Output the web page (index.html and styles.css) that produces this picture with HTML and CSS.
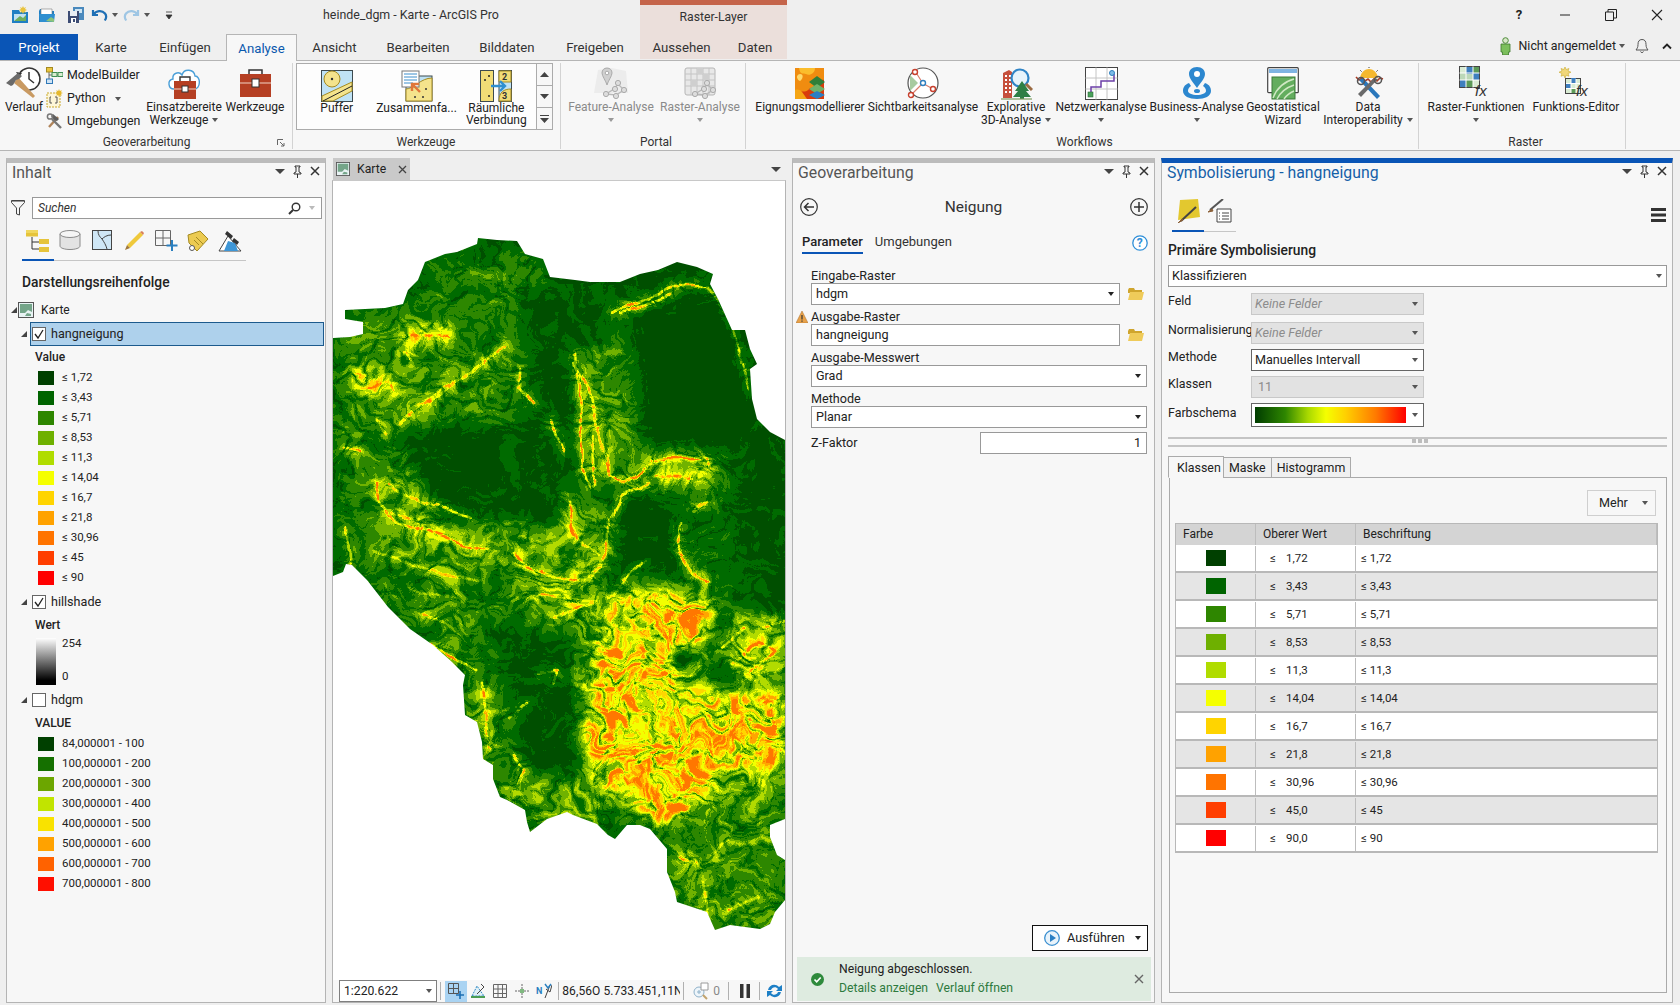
FILE: index.html
```html
<!DOCTYPE html>
<html lang="de">
<head>
<meta charset="utf-8">
<title>heinde_dgm - Karte - ArcGIS Pro</title>
<link rel="stylesheet" href="styles.css">
</head>
<body>
<div class="app">
  <div class="ctx"><span>Raster-Layer</span></div>

  <header class="titlebar">
    <div class="qat">
      <svg class="q1" width="18" height="18" viewBox="0 0 18 18"><path d="M1 4h7l1 2h8v11H1z" fill="#1f7fc4"/><path d="M3 8h12v7H3z" fill="#bfe0f2"/><path d="M3 15l6-5 3 2 3-3v6z" fill="#6fae5c"/><path d="M12 0l1 2 2-1-1 2 2 1-2 1 1 2-2-1-1 2-1-2-2 1 1-2-2-1 2-1-1-2 2 1z" fill="#e9c33c"/></svg>
      <svg class="q2" width="18" height="18" viewBox="0 0 18 18"><path d="M1 5l1-2h5l1 2h8v11H1z" fill="#1f7fc4"/><path d="M3 3h11v7H3z" fill="#fff" stroke="#7a7a7a" stroke-width=".6"/><path d="M1 8h16l-1 8H2z" fill="#2f8fd0"/><path d="M8 15l5-4 3 2v3z" fill="#8cc47a"/></svg>
      <svg class="q3" width="18" height="18" viewBox="0 0 18 18"><path d="M6 1h11v13H6z" fill="#4a89bd"/><path d="M8 3h7v4H8z" fill="#cfe5f3"/><path d="M1 5h11v12H1z" fill="#3d4c74"/><path d="M3 5h7v5H3z" fill="#e9eef4"/><path d="M4 12h5v5H4z" fill="#fff"/><path d="M6 13h2v3H6z" fill="#3d4c74"/></svg>
      <svg class="q4" width="17" height="14" viewBox="0 0 17 14"><path d="M2 2v5h5M2.600 6.600C5 2.500 11 2 14 5.500c1.600 2 1.400 4.600-.2 7" fill="none" stroke="#1e6fb5" stroke-width="2.200"/></svg>
      <i class="caret q5"></i>
      <svg class="q6" width="17" height="14" viewBox="0 0 17 14"><path d="M15 2v5h-5M14.400 6.600C12 2.500 6 2 3 5.500c-1.600 2-1.400 4.600.2 7" fill="none" stroke="#9fc6e4" stroke-width="2.200"/></svg>
      <i class="caret q7"></i>
      <svg class="q8" width="8" height="9" viewBox="0 0 8 9"><path d="M1 1h6M1 4h6l-3 4z" fill="#333" stroke="#333" stroke-width=".8"/></svg>
    </div>
    <div class="doc-title">heinde_dgm - Karte - ArcGIS Pro</div>
    <div class="winctl">
      <span class="wbtn help">?</span>
      <span class="wbtn"><svg width="12" height="12" viewBox="0 0 12 12"><path d="M1 6h10" stroke="#222" stroke-width="1"/></svg></span>
      <span class="wbtn"><svg width="12" height="12" viewBox="0 0 12 12"><path d="M.5 3h8v8.500h-8zM3 3V.5h8.500V9H9" fill="none" stroke="#222"/></svg></span>
      <span class="wbtn"><svg width="12" height="12" viewBox="0 0 12 12"><path d="M1 1l10 10M11 1L1 11" stroke="#222" stroke-width="1.100"/></svg></span>
    </div>
  </header>

  <nav class="tabrow">
    <a class="tab project">Projekt</a>
    <a class="tab">Karte</a>
    <a class="tab">Einfügen</a>
    <a class="tab active">Analyse</a>
    <a class="tab">Ansicht</a>
    <a class="tab">Bearbeiten</a>
    <a class="tab">Bilddaten</a>
    <a class="tab">Freigeben</a>
    <a class="tab">Aussehen</a>
    <a class="tab">Daten</a>
    <div class="account">
      <svg width="11" height="18" viewBox="0 0 11 18"><circle cx="5.500" cy="3.500" r="2.800" fill="#d8e8c8" stroke="#4d8a3a"/><path d="M1 7h9v8H8.500v3h-6v-3H1z" fill="#7cbf5c" stroke="#3f7a2e" stroke-width=".8"/></svg>
      <span class="acct-name">Nicht angemeldet</span><i class="caret"></i>
      <svg class="bell" width="14" height="16" viewBox="0 0 14 16"><path d="M7 1.500c-3 0-4 2-4 5 0 3-1 4-2 5.500h12c-1-1.500-2-2.500-2-5.500 0-3-1-5-4-5zM5.500 13.500a1.600 1.600 0 0 0 3 0" fill="none" stroke="#555" stroke-width="1"/></svg>
      <svg class="chev" width="10" height="7" viewBox="0 0 10 7"><path d="M1 5.500l4-4 4 4" fill="none" stroke="#222" stroke-width="1.800"/></svg>
    </div>
  </nav>

  <section class="ribbon">
    <div class="group g-geo">
      <div class="tools">
        <div class="tool t-verlauf">
          <span class="ticon"><svg width="38" height="34" viewBox="0 0 38 34"><circle cx="24" cy="13" r="11" fill="#fff" stroke="#333" stroke-width="1.500" stroke-dasharray="52 8" transform="rotate(-100 24 13)"/><path d="M24 6v7l5 4" fill="none" stroke="#333" stroke-width="1.500"/><path d="M11 6l3 5 3-4z" fill="#333"/><path d="M9 17l19 15 2-2-17-19z" fill="#c99a62"/><path d="M1 17l12-10 4 3-3 3-3 1-3 5-2 1z" fill="#6a6a6a"/></svg></span>
          <span class="lbl">Verlauf</span>
        </div>
        <div class="smalls">
          <div class="small"><svg width="17" height="17" viewBox="0 0 17 17"><path d="M3 3v11h3M6 8H3M8 8h5" fill="none" stroke="#666"/><rect x=".5" y=".5" width="6" height="4.500" fill="#eac53f" stroke="#a48a22"/><rect x="6" y="5.500" width="5" height="4" fill="#d8ecd0" stroke="#3f8f55"/><rect x="12" y="5.500" width="5" height="4" fill="#d8ecd0" stroke="#3f8f55"/><rect x=".5" y="12" width="6" height="4.500" fill="#cfe3f4" stroke="#2f78b7"/></svg><span>ModelBuilder</span></div>
          <div class="small py"><svg width="17" height="19" viewBox="0 0 17 19"><path d="M1 4h13v14H1z" fill="#fdf6d8" stroke="#c9a92c" stroke-dasharray="2 1"/><path d="M5 8H4v6h2M9 8h2v6H9" fill="none" stroke="#555"/><path d="M13 0l.8 2 2-.8-.8 2 2 .8-2 .8.800 2-2-.8-.8 2-.8-2-2 .8.800-2-2-.8 2-.8-.8-2 2 .8z" fill="#e6b92c"/></svg><span>Python</span><i class="caret"></i></div>
          <div class="small"><svg width="17" height="17" viewBox="0 0 17 17"><path d="M3 14L12 4" stroke="#b0845a" stroke-width="2.400"/><path d="M7 1l6 5-2 2-3-1-3-4z" fill="#5e5e5e"/><path d="M15 15L6 6" stroke="#777" stroke-width="2.400"/><circle cx="4" cy="3.500" r="2.600" fill="none" stroke="#777" stroke-width="1.500"/></svg><span>Umgebungen</span></div>
        </div>
        <div class="tool t-einsatz">
          <span class="ticon"><svg width="34" height="33" viewBox="0 0 34 33"><path d="M7 22C1 22 0 13 6 12 5 6 12 4 15 8c2-7 12-6 13 1 6 0 6 13-1 13" fill="#fff" stroke="#4a9fd8" stroke-width="1.400"/><path d="M7 14h22v18H7z" fill="#b53f23"/><path d="M13 14v-4h10v4" fill="none" stroke="#333" stroke-width="1.400"/><path d="M7 22h22" stroke="#f3d4c6"/><rect x="15" y="19" width="6" height="6" fill="#fff" stroke="#333"/></svg></span>
          <span class="lbl">Einsatzbereite<br>Werkzeuge<i class="caret in"></i></span>
        </div>
        <div class="tool t-werk">
          <span class="ticon"><svg width="33" height="28" viewBox="0 0 33 28"><path d="M1 5h31v23H1z" fill="#b53f23"/><path d="M10 5V1h13v4" fill="none" stroke="#333" stroke-width="1.500"/><path d="M1 14h31" stroke="#f3d4c6"/><rect x="13" y="10" width="7" height="8" fill="#fff" stroke="#333"/></svg></span>
          <span class="lbl">Werkzeuge</span>
        </div>
      </div>
      <div class="grp-label">Geoverarbeitung<svg class="launch" width="8" height="8" viewBox="0 0 8 8"><path d="M.5 6V.5H6M3 3l4 4M7 4v3H4" fill="none" stroke="#666"/></svg></div>
    </div>

    <div class="group g-werk">
      <div class="gallery">
        <div class="gal-item">
          <span class="ticon"><svg width="32" height="32" viewBox="0 0 32 32"><rect x=".5" y=".5" width="31" height="31" fill="#bfe2f5" stroke="#3d4a4f"/><circle cx="11" cy="9" r="8" fill="#f4e38c" stroke="#a48a22"/><circle cx="11" cy="9" r="1.200" fill="#333"/><path d="M1 31v-5L31 12v9L12 31z" fill="#f4e38c" stroke="#a48a22"/><path d="M2 31L31 16" stroke="#222"/></svg></span>
          <span class="lbl">Puffer</span>
        </div>
        <div class="gal-item">
          <span class="ticon"><svg width="32" height="32" viewBox="0 0 32 32"><rect x="5" y="6" width="26" height="25" fill="#bfe2f5" stroke="#3d4a4f"/><path d="M5 31V19C12 19 20 8 31 8v23z" fill="#f4e38c" stroke="#a48a22"/><circle cx="14" cy="27" r="1" fill="#333"/><circle cx="22" cy="27" r="1" fill="#333"/><circle cx="25" cy="19" r="1" fill="#333"/><rect x="1" y="1" width="17" height="16" fill="#fff" stroke="#777"/><path d="M3 4h13M3 7h13M3 10h13M3 13h9" stroke="#3d8ecb"/><path d="M19 22l-7-7M11 21v-7h7" fill="none" stroke="#e0763a" stroke-width="2.400"/></svg></span>
          <span class="lbl">Zusammenfa...</span>
        </div>
        <div class="gal-item">
          <span class="ticon"><svg width="32" height="32" viewBox="0 0 32 32"><rect x=".5" y=".5" width="13" height="31" fill="#f1dc76" stroke="#3d4a4f"/><rect x="19" y=".5" width="12.500" height="31" fill="#bfe2f5" stroke="#3d4a4f"/><path d="M19 1h12v11H19zM19 31c0-9 5-12 12-12v12z" fill="#f1dc76" stroke="#a48a22"/><text x="22" y="10" class="gnum">2</text><text x="22" y="29" class="gnum">3</text><circle cx="9" cy="6" r="1" fill="#222"/><circle cx="5" cy="10" r="1" fill="#222"/><circle cx="9" cy="26" r="1" fill="#222"/><path d="M11 16h13M20 11l5 5-5 5" fill="none" stroke="#2f8fd0" stroke-width="2.400"/></svg></span>
          <span class="lbl">Räumliche<br>Verbindung</span>
        </div>
        <div class="gal-scroll">
          <span><svg width="9" height="5" viewBox="0 0 9 5"><path d="M4.500 0L9 5H0z" fill="#444"/></svg></span>
          <span><svg width="9" height="5" viewBox="0 0 9 5"><path d="M4.500 5L9 0H0z" fill="#444"/></svg></span>
          <span><svg width="9" height="8" viewBox="0 0 9 8"><path d="M0 0h9v1H0zM0 3h9L4.500 8z" fill="#444"/></svg></span>
        </div>
      </div>
      <div class="grp-label">Werkzeuge</div>
    </div>

    <div class="group g-portal">
      <div class="tools">
        <div class="tool t-feat off">
          <span class="ticon"><svg width="34" height="34" viewBox="0 0 34 34"><path d="M4 4l14-2 14 3 2 22H0z" fill="#ececec"/><path d="M13 2c-3 0-5 2-5 5 0 3 4 8 5 12 1-4 5-9 5-12 0-3-2-5-5-5z" fill="#d0d0d0" stroke="#aaa"/><circle cx="13" cy="7" r="1.800" fill="#fff" stroke="#aaa"/><path d="M12 28l8-5 4-5 6 6-8 5z" fill="none" stroke="#b8b8b8" stroke-width="1.400"/><circle cx="12" cy="28" r="2.600" fill="#ddd" stroke="#aaa"/><circle cx="21" cy="23" r="2.600" fill="#ddd" stroke="#aaa"/><circle cx="24" cy="17" r="2.600" fill="#ddd" stroke="#aaa"/><circle cx="30" cy="24" r="2.600" fill="#ddd" stroke="#aaa"/><circle cx="22" cy="30" r="2.600" fill="#ddd" stroke="#aaa"/></svg></span>
          <span class="lbl dim">Feature-Analyse</span><i class="caret mid dimc"></i>
        </div>
        <div class="tool t-rast off">
          <span class="ticon"><svg width="34" height="34" viewBox="0 0 34 34"><rect x="2" y="2" width="30" height="27" rx="2" fill="#e8e8e8" stroke="#b5b5b5"/><path d="M2 8h30M2 14h30M2 20h30M8 2v27M14 2v27M20 2v27M26 2v27" stroke="#c4c4c4"/><path d="M14 2h6v6h-6zM20 8h6v6h-6zM8 14h6v6H8z" fill="#cfcfcf"/><path d="M12 28l8-5 4-5 6 6-8 5z" fill="none" stroke="#b8b8b8" stroke-width="1.400"/><circle cx="12" cy="28" r="2.600" fill="#ddd" stroke="#aaa"/><circle cx="21" cy="23" r="2.600" fill="#ddd" stroke="#aaa"/><circle cx="24" cy="17" r="2.600" fill="#ddd" stroke="#aaa"/><circle cx="30" cy="24" r="2.600" fill="#ddd" stroke="#aaa"/><circle cx="22" cy="30" r="2.600" fill="#ddd" stroke="#aaa"/></svg></span>
          <span class="lbl dim">Raster-Analyse</span><i class="caret mid dimc"></i>
        </div>
      </div>
      <div class="grp-label">Portal</div>
    </div>

    <div class="group g-flow">
      <div class="tools">
        <div class="tool t-eig">
          <span class="ticon"><svg width="30" height="31" viewBox="0 0 30 31"><rect width="29" height="31" fill="#d93c0c"/><path d="M0 0h29v12c-6-2-8 8-14 8-4 6-10 2-15 4z" fill="#f08c10"/><path d="M4 0h16c0 6-6 8-9 6-3-1-6 1-7-6z" fill="#fbbd2c"/><path d="M0 22c6-2 8 4 12 9H0z" fill="#f5a514"/><path d="M5 6c4 0 3 5 0 7-3-1-5-6 0-7z" fill="#ffd96a"/><path d="M22 8l8 6-8 6-8-6z" fill="#2f7f38"/><path d="M22 16l8 5-8 5-8-5z" fill="#6fb36a"/><path d="M22 23l8 4-8 4-8-4z" fill="#2a7fc4"/></svg></span>
          <span class="lbl">Eignungsmodellierer</span>
        </div>
        <div class="tool t-sicht">
          <span class="ticon"><svg width="32" height="32" viewBox="0 0 32 32"><circle cx="16" cy="16" r="15" fill="#fff" stroke="#555" stroke-width="1.200"/><path d="M3 8v16l8-8z" fill="#a7cba0"/><path d="M8 4l7 11M17 17l9 5M5 27l10-10" stroke="#d87d6a" stroke-width="1.200"/><circle cx="8" cy="5" r="2.500" fill="#fff" stroke="#c7402e" stroke-width="1.400"/><circle cx="16" cy="16" r="2.500" fill="#fff" stroke="#2f7fbf" stroke-width="1.400"/><circle cx="26" cy="22" r="2.500" fill="#fff" stroke="#c7402e" stroke-width="1.400"/><circle cx="4" cy="28" r="2.500" fill="#fff" stroke="#c7402e" stroke-width="1.400"/></svg></span>
          <span class="lbl">Sichtbarkeitsanalyse</span>
        </div>
        <div class="tool t-expl">
          <span class="ticon"><svg width="33" height="33" viewBox="0 0 33 33"><path d="M3 6l6-3 3 2v26H3z" fill="#c6503c"/><path d="M5 9h2M9 9h2M5 13h2M9 13h2M5 17h2M9 17h2M5 21h2M9 21h2M5 25h2M9 25h2" stroke="#fff" stroke-width="2"/><circle cx="20" cy="11" r="8.500" fill="#e6f3fb" stroke="#2f84c6" stroke-width="2.200"/><path d="M26 17l6 6" stroke="#9b6b42" stroke-width="3"/><path d="M22 14l-7 10h3l-5 6h7v2h4v-2h7l-5-6h3z" fill="#2e7f45"/><path d="M1 32h31" stroke="#7e9d5e" stroke-width="1.200"/></svg></span>
          <span class="lbl">Explorative<br>3D-Analyse<i class="caret in"></i></span>
        </div>
        <div class="tool t-netz">
          <span class="ticon"><svg width="33" height="33" viewBox="0 0 33 33"><rect x=".5" y=".5" width="32" height="32" fill="#fff" stroke="#444"/><path d="M.5 11h32M.5 22h32M11 .5v32M22 .5v32" stroke="#c4c4c4"/><path d="M6 27v-7h10v-6h13V7" fill="none" stroke="#6c3fa8" stroke-width="1.500"/><rect x="3" y="25" width="5" height="5" fill="#4ba15b" stroke="#2c6c39" stroke-width=".6"/><circle cx="27" cy="6" r="2.500" fill="#7fbbe6" stroke="#2f7fbf"/></svg></span>
          <span class="lbl">Netzwerkanalyse</span><i class="caret mid"></i>
        </div>
        <div class="tool t-biz">
          <span class="ticon"><svg width="30" height="34" viewBox="0 0 30 34"><path d="M15 1c-5 0-8 3-8 7 0 5 5 9 8 14 3-5 8-9 8-14 0-4-3-7-8-7z" fill="#2c87cf"/><circle cx="15" cy="8" r="3" fill="#fff"/><path d="M7 17C2 19 1 22 1 25c0 5 6 8 14 8s14-3 14-8c0-3-1-6-6-8l-2 3c2 1 3 3 3 5 0 2-4 4-9 4s-9-2-9-4c0-2 1-4 3-5z" fill="#2c87cf"/><ellipse cx="15" cy="25" rx="3" ry="2" fill="#2c87cf"/></svg></span>
          <span class="lbl">Business-Analyse</span><i class="caret mid"></i>
        </div>
        <div class="tool t-stat">
          <span class="ticon"><svg width="32" height="33" viewBox="0 0 32 33"><rect x=".7" y=".7" width="30.600" height="25" rx="1" fill="#fff" stroke="#444" stroke-width="1.200"/><rect x="2" y="2" width="28" height="4" fill="#7fb4e2"/><rect x="5" y="10" width="23" height="22" fill="#63ad5e" stroke="#3d7a3b"/><path d="M6 31C9 23 16 15 27 12M10 32c3-6 8-11 17-14M17 32c2-3 5-6 10-8" fill="none" stroke="#cfe8c4" stroke-width="1.400"/></svg></span>
          <span class="lbl">Geostatistical<br>Wizard</span>
        </div>
        <div class="tool t-data">
          <span class="ticon"><svg width="33" height="34" viewBox="0 0 33 34"><path d="M8 12C9 6 13 3 17 3s8 3 9 9z" fill="#f5b82e"/><path d="M4 11l3 3 3-2 3 3 3-2 3 3 3-3 3 2 3-3 3 1" fill="none" stroke="#a83a22" stroke-width="1.600"/><path d="M17 1v2M8 4l2 2M26 4l-2 2" stroke="#444" stroke-dasharray="1 1"/><path d="M7 14l18 19 3-3L11 12z" fill="#2a77bb"/><path d="M26 13L9 31l-3-3 16-16z" fill="#6a6a6a"/><circle cx="26" cy="14" r="3.500" fill="none" stroke="#555" stroke-width="1.500"/><circle cx="9" cy="15" r="3.500" fill="none" stroke="#555" stroke-width="1.500"/></svg></span>
          <span class="lbl">Data<br>Interoperability<i class="caret in"></i></span>
        </div>
      </div>
      <div class="grp-label flow-label">Workflows</div>
    </div>

    <div class="group g-raster">
      <div class="tools">
        <div class="tool t-funk">
          <span class="ticon"><svg width="34" height="34" viewBox="0 0 34 34"><rect x=".5" y=".5" width="20" height="21" fill="#d9ecd4" stroke="#444"/><path d="M1 7h19v7H1z" fill="#bcd8b8"/><path d="M7 1h7v7H7zM14 7h6v7h-6zM1 14h6v7H1z" fill="#3f7fbe"/><path d="M14 1h6v6h-6zM7 14h7v7H7z" fill="#5c9a57"/><path d="M.5 7h20M.5 14h20M7 .5v21M14 .5v21" stroke="#fff"/><text x="16" y="30" class="fx">fx</text></svg></span>
          <span class="lbl">Raster-Funktionen</span><i class="caret mid"></i>
        </div>
        <div class="tool t-edit">
          <span class="ticon"><svg width="34" height="34" viewBox="0 0 34 34"><path d="M6 1l1.200 2.500L10 2.500 9 5l3 1.200L9 7.500l1 2.700-2.800-1L6 12 4.800 9.200 2 10.200l1-2.700L0 6.200 3 5 2 2.500l2.800 1z" fill="#f0d77a" stroke="#c9a92c" stroke-width=".6"/><rect x="6.500" y="12.500" width="15" height="15" fill="#d9ecd4" stroke="#444"/><path d="M7 17h5v5H7zM12 12h5v5h-5z" fill="#3f7fbe"/><path d="M12 22h5v5h-5z" fill="#5c9a57"/><path d="M7 17.500h14M7 22.500h14M12 13v14M17 13v14" stroke="#fff"/><text x="17" y="30" class="fx">fx</text></svg></span>
          <span class="lbl">Funktions-Editor</span>
        </div>
      </div>
      <div class="grp-label">Raster</div>
    </div>
  </section>

  <main class="workspace">
    <!-- Inhalt -->
    <section class="panel p-toc">
      <div class="phead"><span class="ptitle">Inhalt</span>
        <span class="pctl"><i class="caret big"></i><svg width="9" height="13" viewBox="0 0 9 13"><path d="M2 1h5v1H6v5l2 1v1H1V8l2-1V2H2zM4.500 9v4" fill="none" stroke="#333"/></svg><svg width="10" height="10" viewBox="0 0 10 10"><path d="M1 1l8 8M9 1L1 9" stroke="#333" stroke-width="1.500"/></svg></span>
      </div>
      <div class="searchrow">
        <svg width="14" height="16" viewBox="0 0 14 16"><path d="M.5.500h13v2L8.500 8v7l-3-1V8L.5 2.500z" fill="#f7f7f7" stroke="#444"/><path d="M1 1h12v1H1z" fill="#999"/></svg>
        <div class="search"><span>Suchen</span>
          <svg class="mag" width="13" height="13" viewBox="0 0 13 13"><circle cx="8" cy="5" r="3.800" fill="none" stroke="#333" stroke-width="1.400"/><path d="M5 8l-4 4" stroke="#333" stroke-width="2"/></svg><i class="caret faint"></i>
        </div>
      </div>
      <div class="toctabs">
        <span class="tt on"><svg width="24" height="22" viewBox="0 0 24 22"><path d="M6 7v12h9M6 12h9" fill="none" stroke="#333"/><rect y="0" width="12" height="3" fill="#f0d75e"/><rect y="3" width="12" height="3.500" fill="#e6c43a"/><rect x="13" y="9" width="10" height="5" fill="#e6c43a"/><rect x="13" y="17" width="10" height="5" fill="#e6c43a"/></svg></span>
        <span class="tt"><svg width="22" height="20" viewBox="0 0 22 20"><path d="M1 4v12c0 2 4.500 3.500 10 3.500S21 18 21 16V4z" fill="#e3e3e3" stroke="#8a8a8a"/><ellipse cx="11" cy="4" rx="10" ry="3.500" fill="#f5f5f5" stroke="#8a8a8a"/></svg></span>
        <span class="tt"><svg width="20" height="20" viewBox="0 0 20 20"><rect x=".5" y=".5" width="19" height="19" fill="#cfe7f6" stroke="#444"/><path d="M6 1c0 4 2 6 4 8 2 3 4 6 5 10M19 5c-4 0-7 2-9 4" fill="none" stroke="#444"/></svg></span>
        <span class="tt"><svg width="21" height="21" viewBox="0 0 21 21"><path d="M3 15L16 2l3 3L6 18z" fill="#efc93c"/><path d="M16 2l3 3 1-2-2-2z" fill="#d9805a"/><path d="M3 15l3 3-5 2z" fill="#a0793b"/></svg></span>
        <span class="tt"><svg width="23" height="22" viewBox="0 0 23 22"><path d="M.5.500h15v15H.5zM8 .5v15M.5 8h15" fill="none" stroke="#666"/><path d="M17 10v11M11.500 15.500H22.500" stroke="#2a7fbf" stroke-width="2"/></svg></span>
        <span class="tt"><svg width="22" height="22" viewBox="0 0 22 22"><path d="M13 1l8 8-11 12-8-8-1-8z" fill="#eccb52" stroke="#a48a22"/><path d="M9 7l7 7M7 10l5 5" stroke="#a48a22"/><circle cx="5" cy="18" r="2.500" fill="#fff" stroke="#555"/></svg></span>
        <span class="tt"><svg width="24" height="22" viewBox="0 0 24 22"><path d="M1 21L10 6l13 15z" fill="#fff" stroke="#444"/><path d="M6 21l4-10 7 2 3 8z" fill="#3e96d6"/><path d="M9 1l6 5-2 3-6-5zM16 8l5 4-2 3-5-4z" fill="#333"/></svg></span>
      </div>
      <h3 class="toc-h">Darstellungsreihenfolge</h3>
      <div class="tree map-node"><i class="arrow"></i><svg width="16" height="16" viewBox="0 0 16 16"><rect x=".5" y=".5" width="15" height="15" fill="#e9f3f4" stroke="#555"/><path d="M2 2h12v8l-4-2-3 3H2z" fill="#74a589"/><path d="M7 14l2-3 4 1v2z" fill="#74a589"/></svg><span>Karte</span></div>
      <div class="tree layer sel"><i class="arrow"></i><span class="chk"><svg width="12" height="12" viewBox="0 0 12 12"><path d="M2 6l3 4 5-8" fill="none" stroke="#222" stroke-width="1.300"/></svg></span><span>hangneigung</span></div>
      <div class="lg-head">Value</div>
      <div class="lg"><b class="c1"></b>≤ 1,72</div>
      <div class="lg"><b class="c2"></b>≤ 3,43</div>
      <div class="lg"><b class="c3"></b>≤ 5,71</div>
      <div class="lg"><b class="c4"></b>≤ 8,53</div>
      <div class="lg"><b class="c5"></b>≤ 11,3</div>
      <div class="lg"><b class="c6"></b>≤ 14,04</div>
      <div class="lg"><b class="c7"></b>≤ 16,7</div>
      <div class="lg"><b class="c8"></b>≤ 21,8</div>
      <div class="lg"><b class="c9"></b>≤ 30,96</div>
      <div class="lg"><b class="c10"></b>≤ 45</div>
      <div class="lg"><b class="c11"></b>≤ 90</div>
      <div class="tree layer next"><i class="arrow"></i><span class="chk"><svg width="12" height="12" viewBox="0 0 12 12"><path d="M2 6l3 4 5-8" fill="none" stroke="#222" stroke-width="1.300"/></svg></span><span>hillshade</span></div>
      <div class="lg-head">Wert</div>
      <div class="stretch"><b></b><div class="stretch-l"><span>254</span><span>0</span></div></div>
      <div class="tree layer next last"><i class="arrow"></i><span class="chk"></span><span>hdgm</span></div>
      <div class="lg-head">VALUE</div>
      <div class="lg"><b class="d1"></b>84,000001 - 100</div>
      <div class="lg"><b class="d2"></b>100,000001 - 200</div>
      <div class="lg"><b class="d3"></b>200,000001 - 300</div>
      <div class="lg"><b class="d4"></b>300,000001 - 400</div>
      <div class="lg"><b class="d5"></b>400,000001 - 500</div>
      <div class="lg"><b class="d6"></b>500,000001 - 600</div>
      <div class="lg"><b class="d7"></b>600,000001 - 700</div>
      <div class="lg"><b class="d8"></b>700,000001 - 800</div>
    </section>

    <!-- Karte -->
    <section class="mapwrap">
      <div class="maptabs">
        <div class="maptab"><svg width="14" height="14" viewBox="0 0 16 16"><rect x=".5" y=".5" width="15" height="15" fill="#e9f3f4" stroke="#555"/><path d="M2 2h12v8l-4-2-3 3H2z" fill="#74a589"/><path d="M7 14l2-3 4 1v2z" fill="#74a589"/></svg><span>Karte</span><svg class="tabx" width="9" height="9" viewBox="0 0 9 9"><path d="M1 1l7 7M8 1L1 8" stroke="#444" stroke-width="1.300"/></svg></div>
        <i class="caret big maptab-c"></i>
      </div>
      <div class="canvas">
        <svg class="raster" width="452" height="800" viewBox="333 179 452 800">
          <defs>
            <clipPath id="aoi"><polygon points="333,336 350,335 363,332 363,320 345,317 345,308 385,306 403,302 408,288 418,278 425,260 445,252 457,250 477,242 478,236 497,238 517,239 525,252 543,257 550,275 575,278 590,280 620,280 640,272 658,268 677,260 697,265 713,272 710,282 718,297 732,328 745,328 750,347 757,362 750,367 752,397 757,417 770,430 785,438 785,817 770,823 770,835 777,853 785,858 785,898 775,910 770,922 760,927 730,923 715,928 707,910 677,900 675,890 667,870 667,847 650,827 640,823 627,823 615,837 608,833 597,822 573,813 567,810 547,817 530,830 527,820 525,808 507,798 500,795 493,777 493,763 483,757 482,740 477,720 465,713 463,683 465,673 452,660 433,643 410,627 388,605 367,578 352,563 346,562 343,570 333,574"/></clipPath>
            <filter id="slope" filterUnits="userSpaceOnUse" x="290" y="140" width="540" height="880" color-interpolation-filters="sRGB">
              <feTurbulence type="fractalNoise" baseFrequency=".024" numOctaves="3" seed="4" result="w"/>
              <feDisplacementMap in="SourceGraphic" in2="w" scale="10" xChannelSelector="R" yChannelSelector="G" result="s"/>
              <feTurbulence type="turbulence" baseFrequency=".028 .04" numOctaves="4" seed="11" result="t1"/>
              <feColorMatrix in="t1" type="matrix" values="0 0 0 1.900 0 0 0 0 1.900 0 0 0 0 1.900 0 0 0 0 0 1" result="n1"/>
              <feTurbulence type="turbulence" baseFrequency=".05 .075" numOctaves="3" seed="23" result="t2"/>
              <feColorMatrix in="t2" type="matrix" values="0 0 0 1.900 0 0 0 0 1.900 0 0 0 0 1.900 0 0 0 0 0 1" result="n2"/>
              <feComposite in="n1" in2="n2" operator="arithmetic" k1="0" k2=".5" k3=".5" k4="0" result="mix"/>
              <feDisplacementMap in="mix" in2="w" scale="70" xChannelSelector="G" yChannelSelector="B" result="n"/>
              <feComposite in="s" in2="n" operator="arithmetic" k1="1.050" k2=".05" k3=".02" k4="0" result="m"/>
              <feComponentTransfer in="m">
                <feFuncR type="discrete" tableValues="0 0 .18 .44 .7 .95 1 1 1 1 1"/>
                <feFuncG type="discrete" tableValues=".31 .42 .53 .7 .86 1 .84 .65 .47 .47 .47"/>
                <feFuncB type="discrete" tableValues="0 0 0 0 0 0 0 0 0 0 0"/>
                <feFuncA type="linear" slope="0" intercept="1"/>
              </feComponentTransfer>
            </filter>
            <filter id="b14" filterUnits="userSpaceOnUse" x="290" y="140" width="540" height="880"><feGaussianBlur stdDeviation="14"/></filter>
            <filter id="b5" filterUnits="userSpaceOnUse" x="290" y="140" width="540" height="880"><feGaussianBlur stdDeviation="5"/></filter>
            <filter id="b3" filterUnits="userSpaceOnUse" x="290" y="140" width="540" height="880"><feGaussianBlur stdDeviation="3"/></filter>
            <filter id="b1" filterUnits="userSpaceOnUse" x="290" y="140" width="540" height="880"><feGaussianBlur stdDeviation=".6"/></filter>
            <g id="ridges" fill="none" stroke-linecap="round" stroke-linejoin="round">
              <path d="M610 313L670 285 707 285M620 312L670 292" stroke="#b8b8b8"/>
              <path d="M707 285L718 297 730 323 750 387" stroke="#707070"/>
              <path d="M575 360L587 387 597 423 607 453 610 472 623 480 637 473 653 457" stroke="#d0d0d0"/>
              <path d="M577 350L583 467 592 487 597 483 593 433" stroke="#c0c0c0"/>
              <path d="M520 367L520 387 533 403M550 417L562 450" stroke="#b0b0b0"/>
              <path d="M650 457L707 457 710 467M657 473L693 477" stroke="#d0d0d0"/>
              <path d="M650 480L623 493 610 520 605 547 597 567 583 580" stroke="#c0c0c0"/>
              <path d="M570 500L572 523 583 543 597 553" stroke="#c8c8c8"/>
              <path d="M513 553L527 565 547 573 570 577 587 578 600 565" stroke="#e0e0e0"/>
              <path d="M377 480L380 500 397 520 443 535 463 543 490 547" stroke="#d8d8d8"/>
              <path d="M393 510L410 517M390 480L420 500 470 515" stroke="#b0b0b0"/>
              <path d="M680 523L678 547 693 570 710 580M707 500L693 510" stroke="#b8b8b8"/>
              <path d="M503 347L470 370 430 397 400 420M477 363L443 392 413 407" stroke="#b0b0b0"/>
              <path d="M413 333L447 335M405 350L412 358" stroke="#e0e0e0"/>
              <path d="M353 372L367 373 360 377M367 387L387 380 393 390" stroke="#d0d0d0"/>
              <path d="M377 417L387 430M345 527L350 560M345 445L360 450" stroke="#b0b0b0"/>
              <path d="M373 550L440 573 477 578" stroke="#909090"/>
              <path d="M527 593L570 597 597 600M553 617L597 600" stroke="#c0c0c0"/>
              <path d="M410 587L453 593M423 610L463 632" stroke="#989898"/>
              <path d="M433 643L477 670" stroke="#e0e0e0"/>
              <path d="M483 683L487 733 493 747M512 752L523 767 517 783" stroke="#b8b8b8"/>
              <path d="M527 703L510 717M537 670L557 667 553 680" stroke="#909090"/>
              <path d="M733 663L760 640 773 650 750 670M723 647L743 627M760 625L785 618" stroke="#c8c8c8"/>
              <path d="M680 853L697 860M703 880L707 913M730 840L713 853M760 893L730 907" stroke="#b0b0b0"/>
              <path d="M640 560L600 610M630 590L600 660" stroke="#a0a0a0"/>
            </g>
          </defs>
          <g clip-path="url(#aoi)">
            <g filter="url(#slope)">
              <rect x="290" y="140" width="540" height="880" fill="#181818"/>
              <g filter="url(#b14)">
                <path d="M333 310H520V420L430 425 333 440z" fill="#505050"/>
                <path d="M420 250H545V300H420z" fill="#484848"/>
                <path d="M575 320H625L640 470 590 470z" fill="#585858"/>
                <path d="M333 440H430V560H333z" fill="#3c3c3c"/>
                <path d="M375 480H510V570H375z" fill="#585858"/>
                <path d="M510 500H610V580H510z" fill="#5a5a5a"/>
                <path d="M650 445H725V500H650z" fill="#585858"/>
                <path d="M670 520H740V590H670z" fill="#303030"/>
                <path d="M350 565H490V680L430 640z" fill="#505050"/>
                <path d="M505 575H610V625H505z" fill="#666"/>
                <path d="M465 680H505V770H465z" fill="#606060"/>
                <path d="M495 770H610V830H495z" fill="#666"/>
                <path d="M665 810H785V930H665z" fill="#5c5c5c"/>
                <path d="M575 590H715V650L700 680 785 690V800H720L680 830 600 800 570 700z" fill="#808080"/>
              </g>
              <g filter="url(#b5)">
                <path d="M608 600L663 590 713 610 697 643 670 657 683 693H785V767H723L697 803 663 820 630 803 590 773 590 717 600 660z" fill="#dcdcdc"/>
                <path d="M730 610H785V690H730z" fill="#707070"/>
                <path d="M353 367H397V393H353zM400 325H450V345H400z" fill="#8c8c8c"/>
                <path d="M660 462H710V480H660z" fill="#8c8c8c"/>
                <path d="M670 640L700 645 690 665 665 670z" fill="#101010"/>
                <path d="M515 640H570L575 770H530z" fill="#141414"/>
                <path d="M397 427H560V520H440z" fill="#151515"/>
                <path d="M640 310H740V440H650z" fill="#101010"/>
                <path d="M620 500H680V570H620z" fill="#181818"/>
                <path d="M520 285H610V345H520z" fill="#1c1c1c"/>
                <path d="M450 310H500V350H450z" fill="#383838"/>
              </g>
              <use href="#ridges" stroke-width="12" filter="url(#b3)" opacity=".32"/>
              <use href="#ridges" stroke-width="2.600" filter="url(#b1)"/>
            </g>
          </g>
        </svg>
      </div>
      <div class="statusbar">
        <div class="scale">1:220.622<i class="caret"></i></div>
        <i class="sep"></i>
        <span class="sb on"><svg width="18" height="18" viewBox="0 0 18 18"><path d="M1.500 1.500h10v10h-10zM6.500 1.500v10M1.500 6.500h10" fill="none" stroke="#555"/><path d="M13 9v8M9 13h8" stroke="#1b6fb3" stroke-width="1.600"/></svg></span>
        <span class="sb"><svg width="16" height="16" viewBox="0 0 16 16"><path d="M2 13L7 3l7 10z" fill="#dff0f6" stroke="#2e89c4" stroke-dasharray="2 1"/><path d="M1 14h14" stroke="#4b9d54" stroke-width="2"/><path d="M11 1l3 3-7 7" stroke="#444" fill="none"/></svg></span>
        <span class="sb"><svg width="14" height="14" viewBox="0 0 14 14"><path d="M.5.500h13v13H.5zM.5 5h13M.5 9.500h13M5 .5v13M9.500 .5v13" fill="none" stroke="#666"/></svg></span>
        <span class="sb"><svg width="14" height="14" viewBox="0 0 14 14"><path d="M7 0v5M7 9v5M0 7h5M9 7h5" stroke="#666" stroke-dasharray="2 1"/><rect x="5" y="5" width="4" height="4" fill="#7fb980"/></svg></span>
        <span class="sb"><svg width="16" height="16" viewBox="0 0 16 16"><text x="0" y="11" class="nlet">N</text><path d="M9 15L14 2M10 6l4 3 2-7" fill="none" stroke="#444"/><path d="M9 1l3 4 3-4" fill="none" stroke="#2a7fbf" stroke-width="1.400"/></svg></span>
        <i class="sep"></i>
        <span class="coords">86,56O 5.733.451,11N r</span>
        <i class="sep"></i>
        <span class="sb sel"><svg width="18" height="18" viewBox="0 0 18 18"><circle cx="7" cy="10" r="5" fill="#eef5fa" stroke="#8fb1c9"/><path d="M5 10h4M7 8v4" stroke="#8fb1c9"/><path d="M11 13l4 4" stroke="#c2a36c" stroke-width="2"/><path d="M9 1h7v7H9z" fill="#fff" stroke="#9a9a9a"/></svg></span>
        <span class="count">0</span>
        <i class="sep"></i>
        <span class="sb pause"><svg width="10" height="14" viewBox="0 0 10 14"><path d="M0 0h3.500v14H0zM6.500 0H10v14H6.500z" fill="#333"/></svg></span>
        <i class="sep"></i>
        <span class="sb"><svg width="17" height="18" viewBox="0 0 17 18"><path d="M2 8C3 3 9 1 13 5l3-2v6h-6l2-2C10 4 6 5 5 8zM15 10c-1 5-7 7-11 3l-3 2V9h6l-2 2c2 3 6 2 7-1z" fill="#1d7fc6"/></svg></span>
      </div>
    </section>

    <!-- Geoverarbeitung -->
    <section class="panel p-geo">
      <div class="phead"><span class="ptitle">Geoverarbeitung</span>
        <span class="pctl"><i class="caret big"></i><svg width="9" height="13" viewBox="0 0 9 13"><path d="M2 1h5v1H6v5l2 1v1H1V8l2-1V2H2zM4.500 9v4" fill="none" stroke="#333"/></svg><svg width="10" height="10" viewBox="0 0 10 10"><path d="M1 1l8 8M9 1L1 9" stroke="#333" stroke-width="1.500"/></svg></span>
      </div>
      <div class="gnav">
        <svg width="18" height="18" viewBox="0 0 18 18"><circle cx="9" cy="9" r="8.300" fill="none" stroke="#333" stroke-width="1.200"/><path d="M14 9H5M8.500 5L4.500 9l4 4" fill="none" stroke="#333" stroke-width="1.500"/></svg>
        <span class="gnav-t">Neigung</span>
        <svg width="18" height="18" viewBox="0 0 18 18"><circle cx="9" cy="9" r="8.300" fill="none" stroke="#333" stroke-width="1.200"/><path d="M9 4v10M4 9h10" stroke="#333" stroke-width="1.500"/></svg>
      </div>
      <div class="gtabs">
        <span class="gt on">Parameter</span><span class="gt">Umgebungen</span>
        <svg class="ghelp" width="16" height="16" viewBox="0 0 16 16"><circle cx="8" cy="8" r="7.200" fill="#fff" stroke="#2f8fd8" stroke-width="1.300"/><text x="4.800" y="12" class="q">?</text></svg>
      </div>
      <div class="form">
        <label class="flabel">Eingabe-Raster</label>
        <div class="frow"><div class="fld grow">hdgm<i class="caret dark"></i></div><svg class="folder" width="16" height="12" viewBox="0 0 16 12"><path d="M0 2l1-2h5l1 2h7v3H0z" fill="#cfa52e"/><path d="M0 12L2 4h14l-2 8z" fill="#efcb5a"/></svg></div>
        <label class="flabel warn"><svg width="12" height="12" viewBox="0 0 12 12"><path d="M6 0l6 12H0z" fill="#e8a24a" stroke="#a8692a" stroke-width=".5"/><path d="M6 4v4.500M6 9.500v1.200" stroke="#333" stroke-width="1.200"/></svg>Ausgabe-Raster</label>
        <div class="frow"><div class="fld grow">hangneigung</div><svg class="folder" width="16" height="12" viewBox="0 0 16 12"><path d="M0 2l1-2h5l1 2h7v3H0z" fill="#cfa52e"/><path d="M0 12L2 4h14l-2 8z" fill="#efcb5a"/></svg></div>
        <label class="flabel">Ausgabe-Messwert</label>
        <div class="fld">Grad<i class="caret dark"></i></div>
        <label class="flabel">Methode</label>
        <div class="fld">Planar<i class="caret dark"></i></div>
        <div class="zrow"><span>Z-Faktor</span><div class="fld num">1</div></div>
      </div>
      <div class="runrow">
        <div class="runbtn"><svg width="16" height="16" viewBox="0 0 16 16"><circle cx="8" cy="8" r="7.300" fill="#e8f3fb" stroke="#3a8fd0" stroke-width="1.300"/><path d="M6 4l6 4-6 4z" fill="#2a7fc4"/></svg><span>Ausführen</span><i class="caret dark"></i></div>
      </div>
      <div class="msg">
        <svg width="13" height="13" viewBox="0 0 13 13"><circle cx="6.500" cy="6.500" r="6.500" fill="#2e8a3c"/><path d="M3.500 6.500l2.200 2.300 4-4.300" fill="none" stroke="#fff" stroke-width="1.700"/></svg>
        <div class="msg-t"><div>Neigung abgeschlossen.</div><div class="msg-links"><a>Details anzeigen</a><a>Verlauf öffnen</a></div></div>
        <svg class="msg-x" width="10" height="10" viewBox="0 0 10 10"><path d="M1 1l8 8M9 1L1 9" stroke="#666" stroke-width="1.400"/></svg>
      </div>
    </section>

    <!-- Symbolisierung -->
    <section class="panel p-sym">
      <div class="phead"><span class="ptitle blue">Symbolisierung - hangneigung</span>
        <span class="pctl"><i class="caret big"></i><svg width="9" height="13" viewBox="0 0 9 13"><path d="M2 1h5v1H6v5l2 1v1H1V8l2-1V2H2zM4.500 9v4" fill="none" stroke="#333"/></svg><svg width="10" height="10" viewBox="0 0 10 10"><path d="M1 1l8 8M9 1L1 9" stroke="#333" stroke-width="1.500"/></svg></span>
      </div>
      <div class="symtabs">
        <span class="st on"><svg width="24" height="24" viewBox="0 0 24 24"><path d="M4 1l18-1 2 18-22 3z" fill="#e3c82f"/><path d="M5 22l15-14" stroke="#444" stroke-width="2"/><path d="M2 24l4-4 1 1z" fill="#8a5f37" stroke="#8a5f37"/></svg></span>
        <span class="st"><svg width="24" height="24" viewBox="0 0 24 24"><path d="M2 11L15 0" stroke="#555" stroke-width="2"/><path d="M0 13l4-3 1 2z" fill="#8a5f37" stroke="#8a5f37"/><path d="M9 10h14v13H9z" fill="#fff" stroke="#444"/><path d="M11 14h1M14 14h7M11 17h1M14 17h7M11 20h1M14 20h7" stroke="#444"/></svg></span>
        <svg class="burger" width="15" height="14" viewBox="0 0 15 14"><path d="M0 0h15v3H0zM0 5.500h15v3H0zM0 11h15v3H0z" fill="#333"/></svg>
      </div>
      <h3 class="sym-h">Primäre Symbolisierung</h3>
      <div class="fld wide">Klassifizieren<i class="caret"></i></div>
      <div class="srow r1"><span>Feld</span><div class="fld sfld dis it">Keine Felder<i class="caret"></i></div></div>
      <div class="srow r2"><span>Normalisierung</span><div class="fld sfld dis it">Keine Felder<i class="caret"></i></div></div>
      <div class="srow r3"><span>Methode</span><div class="fld sfld act">Manuelles Intervall<i class="caret"></i></div></div>
      <div class="srow r3"><span>Klassen</span><div class="fld sfld dis pl">11<i class="caret"></i></div></div>
      <div class="srow r3"><span class="farb">Farbschema</span><div class="fld sfld act ramp"><b></b><i class="caret"></i></div></div>
      <div class="splitter"><span></span></div>
      <div class="symnb">
        <span class="nb on">Klassen</span><span class="nb">Maske</span><span class="nb">Histogramm</span>
      </div>
      <div class="symbox">
        <div class="mehr-row"><div class="mehr">Mehr<i class="caret"></i></div></div>
        <div class="ctable">
          <div class="cr head"><span>Farbe</span><span>Oberer Wert</span><span>Beschriftung</span></div>
          <div class="cr"><span class="csw"><b class="c1"></b></span><span class="cv"><em>≤</em>1,72</span><span class="cl">≤ 1,72</span></div>
          <div class="cr alt"><span class="csw"><b class="c2"></b></span><span class="cv"><em>≤</em>3,43</span><span class="cl">≤ 3,43</span></div>
          <div class="cr"><span class="csw"><b class="c3"></b></span><span class="cv"><em>≤</em>5,71</span><span class="cl">≤ 5,71</span></div>
          <div class="cr alt"><span class="csw"><b class="c4"></b></span><span class="cv"><em>≤</em>8,53</span><span class="cl">≤ 8,53</span></div>
          <div class="cr"><span class="csw"><b class="c5"></b></span><span class="cv"><em>≤</em>11,3</span><span class="cl">≤ 11,3</span></div>
          <div class="cr alt"><span class="csw"><b class="c6"></b></span><span class="cv"><em>≤</em>14,04</span><span class="cl">≤ 14,04</span></div>
          <div class="cr"><span class="csw"><b class="c7"></b></span><span class="cv"><em>≤</em>16,7</span><span class="cl">≤ 16,7</span></div>
          <div class="cr alt"><span class="csw"><b class="c8"></b></span><span class="cv"><em>≤</em>21,8</span><span class="cl">≤ 21,8</span></div>
          <div class="cr"><span class="csw"><b class="c9"></b></span><span class="cv"><em>≤</em>30,96</span><span class="cl">≤ 30,96</span></div>
          <div class="cr alt"><span class="csw"><b class="c10"></b></span><span class="cv"><em>≤</em>45,0</span><span class="cl">≤ 45</span></div>
          <div class="cr"><span class="csw"><b class="c11"></b></span><span class="cv"><em>≤</em>90,0</span><span class="cl">≤ 90</span></div>
        </div>
      </div>
    </section>
  </main>
</div>
</body>
</html>
```

FILE: styles.css
```css
* { box-sizing: border-box; }
html, body { margin: 0; padding: 0; }
body { width: 1680px; height: 1005px; overflow: hidden; background: #efefef; color: #222; font: 12px/1.2 Roboto, "Open Sans", sans-serif; }
svg { display: block; flex: none; }
i, em { font-style: normal; }
h3 { margin: 0; font-weight: 500; }

.app { position: relative; width: 1680px; height: 1005px; display: flex; flex-direction: column; }
.ctx { position: absolute; left: 640px; top: 0; width: 147px; height: 59px; background: #ebdfdb; border-top: 5px solid #c5644a; text-align: center; padding-top: 5px; font-size: 12.2px; color: #333; }

.caret { display: inline-block; width: 0; height: 0; border: 3px solid transparent; border-top: 4px solid #555; border-bottom: 0; }
.caret.big { border-width: 5px 5px 0; border-top-color: #444; }
.caret.dark { border-top-color: #222; }
.caret.faint { border-top-color: #bbb; }
.caret.in { margin-left: 4px; vertical-align: 2px; }
.caret.mid { margin-top: 4px; }
.caret.dimc { border-top-color: #999; }

/* title bar */
.titlebar { position: relative; height: 34px; display: flex; align-items: center; flex: none; }
.qat { width: 323px; height: 34px; display: flex; align-items: center; padding: 0 0 4px 11px; }
.q2 { margin-left: 9px; } .q3 { margin-left: 11px; } .q4 { margin-left: 6px; } .q5 { margin-left: 4px; } .q6 { margin-left: 5px; } .q7 { margin-left: 4px; } .q8 { margin-left: 15px; }
.doc-title { font-size: 12.4px; color: #333; padding-bottom: 3px; }
.winctl { margin-left: auto; display: flex; padding-bottom: 4px; }
.wbtn { width: 46px; display: flex; justify-content: center; align-items: center; height: 30px; }
.help { font-weight: 700; font-size: 13px; }

/* tabs */
.tabrow { position: relative; height: 26px; flex: none; display: grid; grid-template-columns: 78px 66px 82px 71px 75px 92px 86px 90px 83px 64px 1fr; align-items: stretch; }
.tab { display: flex; align-items: center; justify-content: center; font-size: 13.2px; color: #333; padding-top: 1px; }
.tab.project { background: #0a55b6; color: #fff; }
.tab.active { background: #f7f7f7; color: #0a58ad; border: 1px solid #b5b5b5; border-bottom: 0; margin-bottom: -1px; position: relative; z-index: 1; }
.account { display: flex; align-items: center; justify-content: flex-end; padding: 0 8px 2px 0; white-space: nowrap; font-size: 12.4px; }
.acct-name { margin-left: 8px; margin-right: 3px; }
.bell { margin-left: 10px; }
.chev { margin-left: 13px; }

/* ribbon */
.ribbon { height: 91px; flex: none; display: flex; background: #f7f7f7; border-top: 1px solid #b5b5b5; border-bottom: 1px solid #b5b5b5; padding-top: 2px; }
.group { position: relative; display: flex; flex-direction: column; margin-bottom: 1px; border-right: 1px solid #d3d3d3; flex: none; }
.tools { display: flex; flex: 1; padding-top: 2px; }
.grp-label { height: 16px; text-align: center; position: relative; color: #333; line-height: 16px; font-size: 12px; top: 1px; }
.launch { position: absolute; right: 7px; top: 5px; }
.g-geo { width: 293px; padding-left: 4px; }
.g-werk { width: 268px; padding-left: 3px; }
.g-portal { width: 185px; padding-left: 6px; }
.g-flow { width: 673px; padding-left: 7px; }
.flow-label { padding-right: 2px; }
.g-raster { width: 207px; padding-left: 7px; }
.g-geo .grp-label { padding-right: 3px; }
.tool { display: flex; flex-direction: column; align-items: center; flex: none; text-align: center; }
.ticon { height: 36px; display: flex; align-items: center; justify-content: center; }
.lbl { line-height: 13px; white-space: nowrap; color: #222; font-size: 12px; }
.lbl.dim { color: #8a8a8a; }
.t-verlauf { width: 40px; } .t-einsatz { width: 76px; } .t-werk { width: 62px; margin-left: 2px; }
.t-feat { width: 88px; } .t-rast { width: 90px; }
.t-eig { width: 114px; } .t-sicht { width: 112px; } .t-expl { width: 74px; } .t-netz { width: 96px; } .t-biz { width: 95px; } .t-stat { width: 78px; } .t-data { width: 92px; }
.t-funk { width: 100px; } .t-edit { width: 100px; }
.smalls { width: 100px; margin-left: 2px; display: flex; flex-direction: column; margin-top: -1px; }
.small { height: 23px; display: flex; align-items: center; gap: 4px; white-space: nowrap; font-size: 12.4px; }
.small .caret { margin-left: 5px; }
.gnum { font: 700 9px Roboto, sans-serif; fill: #333; }
.fx { font: italic 15px "Liberation Sans", sans-serif; fill: #333; }
.nlet { font: 700 9px Roboto, sans-serif; fill: #2a7fbf; }
.gallery { display: flex; width: 257px; height: 67px; background: #fdfdfd; border: 1px solid #ababab; }
.gal-item { width: 80px; display: flex; flex-direction: column; align-items: center; text-align: center; padding-top: 4px; }
.gal-item .lbl { line-height: 11.5px; }
.gal-item .ticon { height: 35px; }
.gal-scroll { width: 16px; margin-left: auto; border-left: 1px solid #ababab; display: flex; flex-direction: column; background: #f7f7f7; }
.gal-scroll span { flex: 1; display: flex; align-items: center; justify-content: center; border-bottom: 1px solid #ababab; }
.gal-scroll span:last-child { border-bottom: 0; }
.g-werk .grp-label { margin-top: auto; padding-right: 4px; }

/* workspace */
.workspace { flex: 1; display: flex; gap: 6px; padding: 7px 0 2px 6px; min-height: 0; }
.panel { display: flex; flex-direction: column; background: #f7f7f7; border: 1px solid #b4b4b4; border-top: 5px solid #bcbcbc; flex: none; position: relative; }
.p-toc { width: 320px; }
.p-geo { width: 363px; }
.p-sym { width: 512px; border-top-color: #0a55b6; }
.phead { height: 20px; display: flex; align-items: center; padding: 0 5px; flex: none; }
.ptitle { font-size: 15.8px; color: #555; }
.ptitle.blue { color: #155fa8; }
.pctl { margin-left: auto; display: flex; align-items: center; gap: 8px; padding-bottom: 4px; }

/* toc */
.searchrow { display: flex; align-items: center; gap: 7px; margin: 14px 3px 0 4px; height: 22px; }
.search { flex: 1; height: 22px; background: #fff; border: 1px solid #999; display: flex; align-items: center; padding: 0 6px 0 5px; font-style: italic; color: #333; }
.search span { flex: 1; }
.search .caret { margin-left: 8px; }
.toctabs { margin: 8px 0 0 15px; width: 224px; height: 34px; display: flex; border-bottom: 1px solid #c6c6c6; align-items: flex-start; padding-top: 1px; }
.tt { width: 32px; display: flex; justify-content: center; height: 33px; padding-top: 2px; }
.tt.on { box-shadow: inset 0 -2px 0 #0a55b6; }
.toc-h { font-size: 13.8px; margin: 11px 0 0 15px; height: 20px; line-height: 20px; color: #222; }
.tree { display: flex; align-items: center; height: 24px; }
.arrow { width: 0; height: 0; border: 3.500px solid transparent; border-right-color: #444; border-bottom-color: #444; flex: none; }
.map-node { margin-top: 6px; padding-left: 4px; }
.map-node svg { margin-left: 1px; }
.map-node span { margin-left: 7px; }
.layer { margin-left: 23px; margin-right: 1px; font-size: 12.6px; border: 1px solid transparent; }
.layer .arrow { margin-left: -10px; margin-right: 2px; }
.layer.sel { background: #aed1ec; border-color: #1c5a8d; }
.layer.next { margin-top: 1px; height: 25px; }
.layer.last { margin-top: 2px; }
.chk { width: 14px; height: 14px; border: 1px solid #666; background: #fff; margin: 0 5px 0 3px; display: flex; align-items: center; justify-content: center; }
.lg-head { height: 22px; line-height: 22px; padding-left: 28px; font-weight: 500; }
.lg { height: 20px; display: flex; align-items: center; padding-left: 31px; font-size: 11.5px; }
.lg b { width: 16px; height: 14px; margin-right: 8px; flex: none; }
.stretch { display: flex; margin: 2px 0 0 29px; height: 47px; }
.stretch b { width: 20px; background: linear-gradient(#fff, #000 90%); }
.stretch-l { display: flex; flex-direction: column; justify-content: space-between; margin: -2px 0 2px 6px; font-size: 11.5px; line-height: 14px; }
.c1 { background: #004000; } .c2 { background: #006400; } .c3 { background: #2e8600; } .c4 { background: #6eb000; } .c5 { background: #b0dc00; } .c6 { background: #f5ff00; } .c7 { background: #ffd400; } .c8 { background: #ffa200; } .c9 { background: #ff7400; } .c10 { background: #ff3e00; } .c11 { background: #ff0000; }
.d1 { background: #004000; } .d2 { background: #157000; } .d3 { background: #6ca600; } .d4 { background: #c1e400; } .d5 { background: #f9e200; } .d6 { background: #ffa200; } .d7 { background: #ff6200; } .d8 { background: #ff0f00; }

/* map */
.mapwrap { width: 454px; flex: none; display: flex; flex-direction: column; }
.maptabs { height: 22px; flex: none; display: flex; align-items: flex-start; padding-left: 1px; }
.maptab { width: 77px; height: 22px; background: #c9c9c9; display: flex; align-items: center; padding-left: 3px; gap: 7px; font-size: 12.2px; }
.tabx { margin-left: 5px; }
.maptab-c { margin-left: auto; margin-top: 9px; margin-right: 5px; }
.canvas { flex: 1; min-height: 0; background: #fff; border: 1px solid #b4b4b4; border-width: 0 1px; border-top: 1px solid #c8c8c8; }
.statusbar { height: 23px; flex: none; display: flex; align-items: center; background: #f7f7f7; border: 1px solid #b4b4b4; border-top: 0; padding-left: 6px; }
.scale { width: 99px; height: 22px; background: #fff; border: 1px solid #7f7f7f; display: flex; align-items: center; justify-content: space-between; padding: 0 4px; font-size: 12.2px; }
.sep { width: 1px; height: 18px; background: #b0b0b0; margin: 0 3px; flex: none; }
.sb { width: 22px; height: 21px; display: flex; align-items: center; justify-content: center; flex: none; }
.sb.on { background: #a9d3f2; margin-left: 1px; }
.coords { width: 119px; overflow: hidden; white-space: nowrap; font-size: 12px; letter-spacing: .1px; }
.count { color: #888; margin-right: 5px; margin-left: 1px; }
.sb.sel { margin-left: 3px; }
.sb.pause { margin-left: 2px; }

/* geoprocessing */
.gnav { display: flex; align-items: center; justify-content: space-between; height: 20px; margin-top: 14px; padding: 0 6px 0 7px; flex: none; }
.gnav-t { font-size: 15.5px; color: #333; padding-right: 1px; }
.gtabs { display: flex; height: 22px; margin: 15px 6px 0 9px; font-size: 13px; flex: none; gap: 12px; }
.gt { height: 22px; line-height: 20px; color: #333; }
.gt.on { border-bottom: 2px solid #0a55b6; font-weight: 500; color: #222; }
.ghelp { margin-left: auto; margin-top: 3px; }
.q { font: 700 12px Roboto, sans-serif; fill: #2f8fd8; }
.form { margin: 14px 7px 0 18px; display: flex; flex-direction: column; flex: none; }
.flabel { height: 15px; line-height: 15px; display: block; position: relative; font-size: 12.6px; }
.flabel svg { position: absolute; left: -15px; top: 2px; }
.fld { height: 22px; margin-bottom: 4px; background: #fff; border: 1px solid #999; display: flex; align-items: center; justify-content: space-between; padding: 0 5px 0 4px; font-size: 12.6px; white-space: nowrap; }
.frow { display: flex; align-items: flex-start; }
.grow { flex: 1; }
.folder { margin: 5px 3px 0 8px; }
.zrow { display: flex; justify-content: space-between; align-items: center; font-size: 12.6px; height: 22px; }
.fld.num { width: 167px; justify-content: flex-end; margin-bottom: 0; }
.runrow { margin-top: auto; display: flex; justify-content: flex-end; padding-right: 6px; flex: none; }
.runbtn { width: 116px; height: 26px; background: #fff; border: 1px solid #111; display: flex; align-items: center; padding: 0 6px 0 11px; gap: 7px; font-size: 12.6px; }
.runbtn .caret { margin-left: auto; }
.msg { margin: 6px 3px 1px 4px; height: 44px; background: #deebe0; display: flex; align-items: center; padding-left: 14px; flex: none; font-size: 12.2px; }
.msg-t { margin-left: 15px; line-height: 19px; }
.msg-links { color: #2d7a3d; display: flex; gap: 8px; }
.msg-x { margin-left: auto; margin-right: 7px; }

/* symbology */
.symtabs { display: flex; margin: 13px 6px 0 10px; height: 36px; flex: none; }
.st { width: 32px; height: 36px; display: flex; justify-content: center; padding-top: 3px; border-bottom: 1px solid #c6c6c6; }
.st.on { border-bottom: 2px solid #0a55b6; }
.burger { margin-left: auto; margin-top: 12px; }
.sym-h { font-size: 13.8px; height: 20px; line-height: 20px; margin: 8px 0 0 6px; color: #222; }
.fld.wide { margin: 5px 5px 0 6px; flex: none; padding: 0 4px 0 3px; }
.srow { display: flex; align-items: flex-start; margin: 6px 0 0 6px; flex: none; font-size: 12.4px; }
.srow.r2 { margin-top: 7px; }
.srow.r3 { margin-top: 5px; }
.srow > span { width: 83px; padding-top: 0; white-space: nowrap; line-height: 16px; }
.srow > span.farb { padding-top: 2px; }
.fld.sfld { width: 173px; margin: 0; padding: 0 5px 0 3px; }
.dis { background: #e2e2e2; border-color: #c8c8c8; color: #8c8c8c; }
.it { font-style: italic; }
.pl { padding-left: 6px !important; }
.act { border-color: #666; }
.ramp { height: 24px; padding-left: 3px !important; }
.ramp b { width: 151px; height: 16px; background: linear-gradient(90deg, #003c00, #2e8600 20%, #a8d800 35%, #f5ff00 47%, #ffd000 60%, #ff7a00 80%, #ff0000); }
.splitter { position: relative; height: 10px; margin: 10px 5px 0 6px; border-top: 2px solid #c4c4c4; border-bottom: 2px solid #c4c4c4; flex: none; }
.splitter span { position: absolute; left: 243px; top: -1px; width: 18px; height: 6px; background-image: radial-gradient(circle 2.500px at 3px 3px, #bdbdbd 100%, transparent), radial-gradient(circle 2.500px at 9px 3px, #bdbdbd 100%, transparent), radial-gradient(circle 2.500px at 15px 3px, #bdbdbd 100%, transparent); }
.symnb { display: flex; margin: 9px 0 0 6px; height: 22px; position: relative; z-index: 1; flex: none; font-size: 12.4px; }
.nb { height: 21px; margin-top: 1px; line-height: 19px; padding: 0 5px; border: 1px solid #aaa; background: #f0f0f0; margin-left: -1px; }
.nb:first-child { margin-left: 0; }
.nb.on { height: 22px; margin-top: 0; width: 56px; background: #f7f7f7; border-bottom-color: #f7f7f7; padding-left: 8px; line-height: 21px; }
.symbox { margin: -1px 5px 9px 7px; flex: 1; border: 1px solid #aaa; padding: 0 8px 0 5px; }
.mehr-row { display: flex; justify-content: flex-end; height: 45px; padding: 12px 2px 0 0; }
.mehr { width: 69px; height: 26px; border: 1px solid #cfcfcf; background: #f7f7f7; display: flex; align-items: center; justify-content: space-between; padding: 0 7px 0 11px; font-size: 12.6px; }
.ctable { border-left: 1px solid #b8b8b8; border-right: 1px solid #b8b8b8; }
.cr { display: grid; grid-template-columns: 80px 100px 1fr; height: 28px; background: #fff; border-bottom: 2px solid #b8b8b8; align-items: stretch; font-size: 11.5px; padding-top: 1px; }
.cr > span { display: flex; align-items: center; border-right: 1px solid #bdbdbd; }
.cr.head { height: 22px; background: #d4d4d4; border-bottom: 0; border-top: 1px solid #b8b8b8; font-size: 12px; padding-top: 0; }
.cr.head > span { padding-left: 7px; }
.cr.alt { background: #e5e5e5; }
.csw { justify-content: center; }
.csw b { width: 20px; height: 16px; margin-top: -2px; }
.cv { padding-left: 14px; }
.cv em { width: 16px; }
.cl { padding-left: 5px; border-right: 0 !important; }
```
